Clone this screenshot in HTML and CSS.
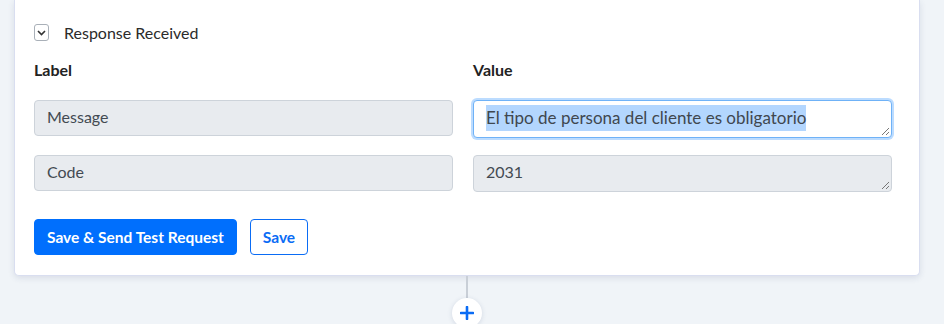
FILE: index.html
```html
<!DOCTYPE html>
<html lang="en">

<head>
    <meta charset="UTF-8">
    <meta name="viewport" content="width=device-width, initial-scale=1.0">
    <title>Response Received</title>
    <link rel="stylesheet" href="styles.css">
</head>

<body>
    <div class="card">
        <div class="section-toggle">
            <span class="toggle-box">
                <svg width="9" height="6" viewBox="0 0 9 6"><path d="M1 1l3.5 3.5L8 1" fill="none" stroke="#333" stroke-width="1.6"/></svg>
            </span>
            <span class="toggle-title">Response Received</span>
        </div>

        <div class="field-grid">
            <div class="col-head">Label</div>
            <div class="col-head">Value</div>

            <div class="field readonly">Message</div>
            <div class="field area focused">
                <span class="selected">El tipo de persona del cliente es obligatorio</span>
                <span class="grip"></span>
            </div>

            <div class="field readonly">Code</div>
            <div class="field area readonly">
                2031
                <span class="grip"></span>
            </div>
        </div>

        <div class="actions">
            <button class="btn btn-primary">Save &amp; Send Test Request</button>
            <button class="btn btn-outline">Save</button>
        </div>
    </div>

    <div class="connector">
        <div class="connector-line"></div>
        <div class="add-step">
            <svg width="14" height="14" viewBox="0 0 14 14"><path d="M7 1v12M1 7h12" stroke="#0a6cf5" stroke-width="2.6" stroke-linecap="round"/></svg>
        </div>
    </div>
</body>

</html>
```

FILE: styles.css
```css
* {
    margin: 0;
    padding: 0;
    box-sizing: border-box;
}

body {
    font-family: 'Lato', 'Noto Sans', sans-serif;
    background: #f0f4f8;
    padding: 0 24px 0 14px;
    color: #2b2b2b;
    overflow: hidden;
}

/* Main card */
.card {
    background: #ffffff;
    border: 1px solid #d9def0;
    border-top: none;
    border-radius: 0 0 5px 5px;
    box-shadow: 0 2px 6px rgba(40, 60, 110, 0.12);
    padding: 23px 27px 20px 19px;
}

.section-toggle {
    display: flex;
    align-items: center;
    gap: 15px;
}

.toggle-box {
    width: 15px;
    height: 17px;
    border: 1px solid #a9b0b8;
    border-radius: 3px;
    display: flex;
    align-items: center;
    justify-content: center;
}

.toggle-title {
    font-size: 16px;
    color: #2b2b2b;
}

/* Label / value grid */
.field-grid {
    display: grid;
    grid-template-columns: 1fr 1fr;
    column-gap: 20px;
    row-gap: 17px;
    margin-top: 18px;
}

.col-head {
    font-size: 16px;
    font-weight: bold;
    color: #222;
    margin-bottom: 4px;
}

.field {
    height: 36px;
    border: 1px solid #cdd3da;
    border-radius: 4px;
    padding: 6px 12px;
    font-size: 16px;
    color: #434a52;
    position: relative;
}

.readonly {
    background: #e8ebef;
}

.area {
    height: 37px;
}

.focused {
    height: 38px;
    background: #fff;
    border-color: #6fb2f7;
    box-shadow: 0 0 0 2px #bcdcff;
    font-size: 17px;
    padding-top: 6px;
}

.selected {
    background: #b3d6fe;
    color: #40474f;
    padding: 2px 0 3px;
}

.grip {
    position: absolute;
    right: 2px;
    bottom: 2px;
    width: 7px;
    height: 7px;
    background: linear-gradient(135deg, transparent 45%, #777 45%, #777 55%, transparent 55%, transparent 72%, #777 72%, #777 82%, transparent 82%);
}

/* Buttons */
.actions {
    display: flex;
    gap: 13px;
    margin-top: 27px;
}

.btn {
    font-family: inherit;
    font-size: 15.5px;
    font-weight: bold;
    height: 36px;
    border-radius: 4px;
    padding: 0 12px;
    cursor: pointer;
}

.btn-primary {
    background: #006ffd;
    border: 1px solid #006ffd;
    color: #fff;
}

.btn-outline {
    background: #fff;
    border: 1px solid #0a6cf5;
    color: #0a6cf5;
}

/* Connector below card */
.connector {
    display: flex;
    flex-direction: column;
    align-items: center;
    width: 906px;
}

.connector-line {
    width: 2px;
    height: 22px;
    background: #c9cfd7;
}

.add-step {
    width: 30px;
    height: 30px;
    border-radius: 50%;
    background: #fff;
    box-shadow: 0 1px 5px rgba(40, 60, 110, 0.15);
    display: flex;
    align-items: center;
    justify-content: center;
}
```
